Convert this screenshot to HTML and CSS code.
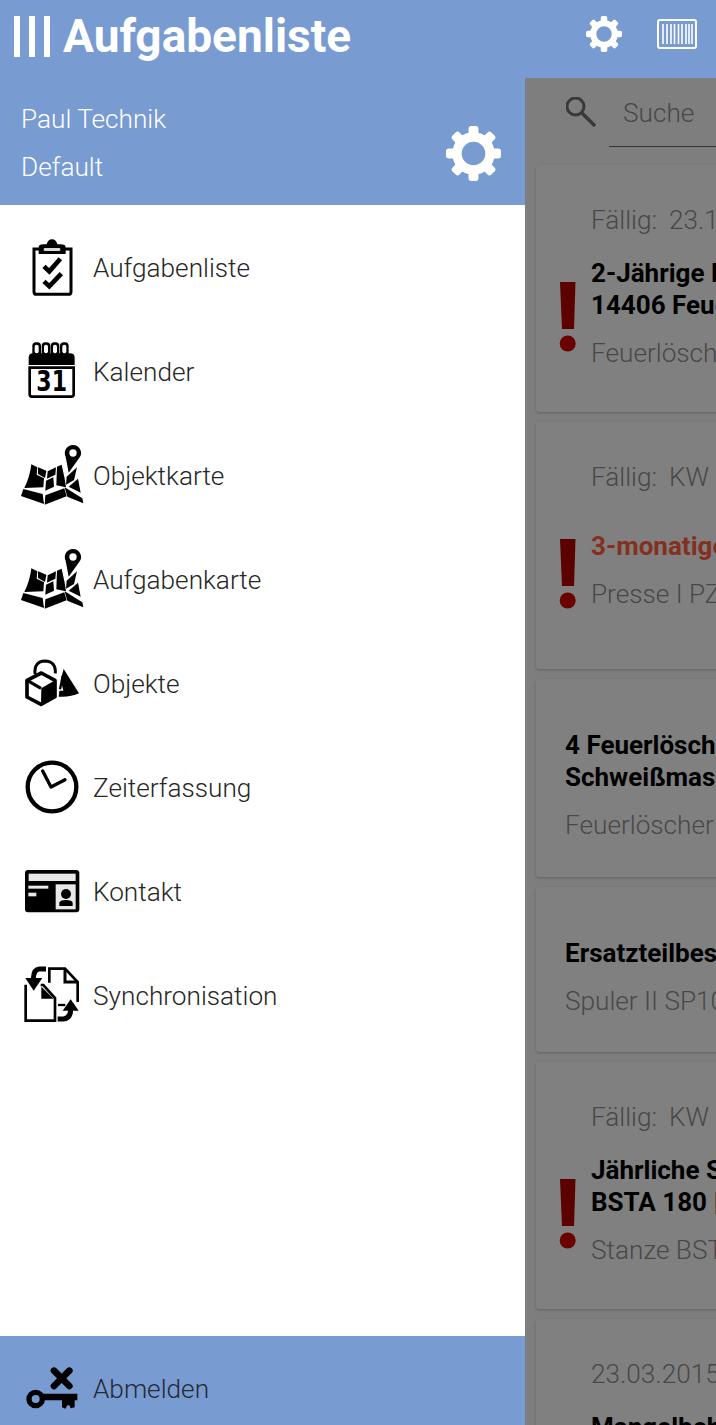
FILE: index.html
```html
<!DOCTYPE html>
<html lang="de">
<head>
<meta charset="utf-8">
<title>Aufgabenliste</title>
<link rel="stylesheet" href="styles.css">
</head>
<body>
<svg class="defs" width="0" height="0">
  <defs>
    <symbol id="gear" viewBox="-50 -50 100 100">
      <g fill="#fff">
        <rect x="-9" y="-50" width="18" height="22" rx="5"/>
        <rect x="-9" y="-50" width="18" height="22" rx="5" transform="rotate(45)"/>
        <rect x="-9" y="-50" width="18" height="22" rx="5" transform="rotate(90)"/>
        <rect x="-9" y="-50" width="18" height="22" rx="5" transform="rotate(135)"/>
        <rect x="-9" y="-50" width="18" height="22" rx="5" transform="rotate(180)"/>
        <rect x="-9" y="-50" width="18" height="22" rx="5" transform="rotate(225)"/>
        <rect x="-9" y="-50" width="18" height="22" rx="5" transform="rotate(270)"/>
        <rect x="-9" y="-50" width="18" height="22" rx="5" transform="rotate(315)"/>
      </g>
      <circle r="30" fill="none" stroke="#fff" stroke-width="17"/>
    </symbol>
    <symbol id="alert" viewBox="0 0 20 72">
      <path d="M2 0H17.500L16 47H4Z" fill="#5c0000"/>
      <circle cx="9.700" cy="61.500" r="8" fill="#6a0202"/>
    </symbol>
    <symbol id="map" viewBox="30 39 192 192">
      <path d="M64 103 82 112 80 134 102 145 100 172 43 174Q60 140 64 103Z"/>
      <path d="M40 177 98 192 102 222 33 198Z"/>
      <path d="M84 112 109 122 105 144 84 132Z"/>
      <path d="M113 124 138 112 136 134 111 146Z"/>
      <path d="M108 152 130 142 132 170 106 182Z"/>
      <path d="M141 110 155 104 164 146 168 172 139 166Z"/>
      <path d="M106 196 163 175 170 199 104 224Z"/>
      <path d="M170 140 201 112 192 150 168 164Z"/>
      <path d="M176 170 204 146 212 188Z"/>
      <path d="M164 172 217 205 220 220 172 200Z"/>
      <path fill-rule="evenodd" d="M189 45A24 24 0 0 1 207 85L176 128 167 80A24 24 0 0 1 189 45ZM189 58A11 11 0 1 0 189 80A11 11 0 1 0 189 58Z"/>
    </symbol>
  </defs>
</svg>

<div class="app">
  <header class="topbar">
    <div class="bars"><span></span><span></span><span></span></div>
    <h1 class="title">Aufgabenliste</h1>
    <svg class="top-gear"><use href="#gear"/></svg>
    <svg class="barcode" viewBox="0 0 40 30">
      <rect x="1" y="1" width="38" height="28" rx="2" fill="none" stroke="#fff" stroke-width="2"/>
      <path d="M6 5V25M10 5V25M14 5V25M17.500 5V25M21.500 5V25M25 5V25M29 5V25M32 5V25M35 5V25" stroke="#fff" stroke-width="1.600"/>
    </svg>
  </header>

  <div class="stage">
    <aside class="drawer">
      <div class="account">
        <div class="account-text">
          <div>Paul Technik</div>
          <div>Default</div>
        </div>
        <svg class="account-gear"><use href="#gear"/></svg>
      </div>
      <nav class="menu">
        <a class="item">
          <svg class="ico" viewBox="30 30 192 192">
            <path d="M88 72H72V200Q72 208 80 208H175Q183 208 183 200V72H165" fill="none" stroke="#000" stroke-width="9"/>
            <path d="M86 87V68Q86 58 100 58H110Q114 43 126 43T142 58H152Q167 58 167 68V87Z"/>
            <rect x="101" y="69" width="50" height="9" rx="4" fill="#d8d8d8"/>
            <path d="M102 124 118 139 151 101M102 169 118 184 154 146" fill="none" stroke="#000" stroke-width="14"/>
          </svg>
          <span>Aufgabenliste</span>
        </a>
        <a class="item">
          <svg class="ico" viewBox="30 342 192 192">
            <path d="M56 420V398Q56 385 70 385H180Q194 385 194 398V420Z"/>
            <rect x="67" y="352" width="26" height="42" rx="11"/>
            <rect x="95" y="352" width="26" height="42" rx="11"/>
            <rect x="122" y="352" width="26" height="42" rx="11"/>
            <rect x="150" y="352" width="26" height="42" rx="11"/>
            <rect x="74" y="359" width="12" height="26" rx="6" fill="#fff"/>
            <rect x="102" y="359" width="12" height="26" rx="6" fill="#fff"/>
            <rect x="129" y="359" width="12" height="26" rx="6" fill="#fff"/>
            <rect x="157" y="359" width="12" height="26" rx="6" fill="#fff"/>
            <path d="M59 428V508Q59 515 66 515H184Q191 515 191 508V428Z" fill="none" stroke="#000" stroke-width="8"/>
            <text class="cal-num" x="125" y="497" textLength="92" lengthAdjust="spacingAndGlyphs">31</text>
          </svg>
          <span>Kalender</span>
        </a>
        <a class="item">
          <svg class="ico"><use href="#map"/></svg>
          <span>Objektkarte</span>
        </a>
        <a class="item">
          <svg class="ico"><use href="#map"/></svg>
          <span>Aufgabenkarte</span>
        </a>
        <a class="item">
          <svg class="ico" viewBox="30 33 192 192">
            <path d="M75 102Q72 64 105 63Q138 64 136 100" fill="none" stroke="#000" stroke-width="9"/>
            <path d="M94 99 135 121V170L93 193 51 171V121Z" fill="#fff" stroke="#000" stroke-width="11" stroke-linejoin="round"/>
            <path d="M94 145 135 121V170L93 193Z"/>
            <path d="M53 122 93 145" stroke="#000" stroke-width="9"/>
            <path d="M161 87 207 160Q182 172 146 170L148 152 160 152 152 120Z"/>
            <path d="M159 106 150 148" stroke="#000" stroke-width="7"/>
          </svg>
          <span>Objekte</span>
        </a>
        <a class="item">
          <svg class="ico" viewBox="30 345 192 192">
            <circle cx="126" cy="441" r="73" fill="none" stroke="#000" stroke-width="13"/>
            <path d="M98 393 123 441 165 419" fill="none" stroke="#000" stroke-width="10" stroke-linecap="round" stroke-linejoin="round"/>
          </svg>
          <span>Zeiterfassung</span>
        </a>
        <a class="item">
          <svg class="ico" viewBox="30 27 192 192">
            <rect x="45" y="60" width="163" height="127" rx="9"/>
            <rect x="56" y="71" width="141" height="22" fill="#e8e8e8"/>
            <rect x="55" y="107" width="60" height="9" fill="#e8e8e8"/>
            <rect x="55" y="128" width="24" height="11" fill="#e8e8e8"/>
            <rect x="137" y="103" width="60" height="75" fill="#e8e8e8"/>
            <circle cx="168" cy="132" r="15"/>
            <path d="M148 168V158Q150 150 168 150T188 158V168Z"/>
          </svg>
          <span>Kontakt</span>
        </a>
        <a class="item">
          <svg class="ico" viewBox="30 339 192 192">
            <path d="M118 398V356H165L203 396V456" fill="none" stroke="#000" stroke-width="8"/>
            <path d="M165 358V396H202" fill="none" stroke="#000" stroke-width="9"/>
            <path d="M47 404V512H135V444L100 405H92" fill="none" stroke="#000" stroke-width="8"/>
            <path d="M94 410V446H131Z"/>
            <path d="M108 357H88Q71 358 70 386" fill="none" stroke="#000" stroke-width="15"/>
            <path d="M46 384H97L71 422Z"/>
            <path d="M143 507H160Q182 505 182 478" fill="none" stroke="#000" stroke-width="15"/>
            <path d="M158 482H206L182 448Z"/>
            <path d="M144 465H166" stroke="#000" stroke-width="7"/>
          </svg>
          <span>Synchronisation</span>
        </a>
      </nav>
      <footer class="logout">
        <svg class="ico" viewBox="60 96 192 192">
          <circle cx="107" cy="222" r="20" fill="none" stroke="#000" stroke-width="16"/>
          <path d="M124 206H232V226H224V247L212 250 208 241H202L196 251 186 247V226H124Z"/>
          <path d="M162 137 208 183M208 137 162 183" stroke="#000" stroke-width="20" stroke-linecap="round"/>
        </svg>
        <span>Abmelden</span>
      </footer>
    </aside>

    <main class="content">
      <div class="search">
        <svg class="search-ico" viewBox="0 0 30 30">
          <circle cx="9.500" cy="9.500" r="8.500" fill="none" stroke="#3a3a3a" stroke-width="3"/>
          <path d="M15.500 15.500 29 29" stroke="#3a3a3a" stroke-width="3.500"/>
        </svg>
        <div class="search-field">Suche</div>
      </div>
      <section class="cards">
        <article class="card dated">
          <svg class="mark"><use href="#alert"/></svg>
          <div class="card-main">
            <div class="date"><span>Fällig:</span><span>23.12.2015</span></div>
            <div class="body">
              <div class="name">2-Jährige Prüfung<br>14406 Feuerlöscher</div>
              <div class="sub">Feuerlöscher Halle 3</div>
            </div>
          </div>
        </article>
        <article class="card dated">
          <svg class="mark"><use href="#alert"/></svg>
          <div class="card-main">
            <div class="date"><span>Fällig:</span><span>KW 32</span></div>
            <div class="body">
              <div class="name overdue">3-monatige Wartung</div>
              <div class="sub">Presse I PZ 100</div>
            </div>
          </div>
        </article>
        <article class="card plain tall">
          <div class="name">4 Feuerlöscher prüfen<br>Schweißmaschine</div>
          <div class="sub">Feuerlöscher Halle 2</div>
        </article>
        <article class="card plain">
          <div class="name">Ersatzteilbestellung</div>
          <div class="sub">Spuler II SP100</div>
        </article>
        <article class="card dated">
          <svg class="mark"><use href="#alert"/></svg>
          <div class="card-main">
            <div class="date"><span>Fällig:</span><span>KW 33</span></div>
            <div class="body">
              <div class="name">Jährliche Sicherheitsprüfung<br>BSTA 180 | Stanze</div>
              <div class="sub">Stanze BSTA 180</div>
            </div>
          </div>
        </article>
        <article class="card plain last">
          <div class="date solo"><span>23.03.2015</span></div>
          <div class="name">Mangelbehebung</div>
        </article>
      </section>
    </main>
  </div>
</div>
</body>
</html>
```

FILE: styles.css
```css
* { box-sizing: border-box; }
html, body { margin: 0; padding: 0; }
body {
  width: 716px;
  height: 1425px;
  overflow: hidden;
  font-family: Roboto, "Liberation Sans", sans-serif;
  background: #808080;
}
.defs { display: block; height: 0; }
.app { display: flex; flex-direction: column; height: 1425px; overflow: hidden; }

.topbar {
  flex: none;
  height: 78px;
  background: #789bd1;
  display: flex;
  align-items: center;
  padding-left: 14px;
  color: #fff;
}
.bars { display: flex; gap: 9px; height: 41px; margin-top: -5px; }
.bars span { width: 6px; background: #fff; }
.title {
  margin: -6px 0 0 13px;
  font-size: 46px;
  font-weight: 700;
  line-height: 48px;
  flex: 1;
}
.top-gear { width: 36px; height: 36px; margin-top: -10px; }
.barcode { width: 40px; height: 30px; margin: -10px 19px 0 35px; }

.stage { flex: 1; display: flex; min-height: 0; }
.drawer {
  flex: none;
  width: 525px;
  background: #fff;
  display: flex;
  flex-direction: column;
}
.account {
  flex: none;
  height: 127px;
  background: #789bd1;
  color: #fff;
  display: flex;
  justify-content: space-between;
  padding: 17px 24px 0 21px;
  font-size: 26.200px;
  font-weight: 355;
  line-height: 48px;
}
.account-gear { width: 55px; height: 55px; margin-top: 31px; }

.menu { flex: 1; padding-top: 10px; }
.item {
  display: flex;
  align-items: center;
  height: 104px;
  padding-left: 20px;
  gap: 9px;
  font-size: 26.200px;
  font-weight: 355;
  color: #262626;
}
.item span { padding-top: 1px; }
.ico { width: 64px; height: 64px; flex: none; }
.logout {
  flex: none;
  height: 89px;
  background: #789bd1;
  display: flex;
  align-items: center;
  padding: 17px 0 0 20px;
  gap: 9px;
  font-size: 26.200px;
  font-weight: 355;
  color: #252a35;
}
.cal-num {
  font-family: "DejaVu Sans", sans-serif;
  font-size: 84px;
  font-weight: 700;
  text-anchor: middle;
}

.content { flex: 1; min-width: 0; overflow: hidden; background: #7e7e7e; }
.search {
  height: 87px;
  display: flex;
  padding-left: 41px;
}
.search-ico { width: 30px; height: 30px; margin-top: 19px; flex: none; }
.search-field {
  width: 200px;
  height: 69px;
  margin-left: 13px;
  padding: 15px 0 0 14px;
  border-bottom: 1px solid #333;
  font-size: 26.200px;
  font-weight: 355;
  line-height: 40px;
  color: #484848;
}
.cards { padding-left: 11px; display: flex; flex-direction: column; gap: 10px; }
.card {
  flex: none;
  width: 480px;
  background: #808080;
  border-radius: 4px;
  box-shadow: 0 1px 3px rgba(0, 0, 0, .22);
  white-space: nowrap;
}
.dated { height: 247px; display: flex; padding-left: 22px; }
.mark { width: 20px; height: 72px; flex: none; margin-top: 117px; }
.card-main {
  margin-left: 13px;
  padding: 39px 0 23px;
  display: flex;
  flex-direction: column;
}
.date {
  display: flex;
  gap: 12px;
  font-size: 26.200px;
  font-weight: 355;
  line-height: 32px;
  color: #484848;
}
.body { flex: 1; display: flex; flex-direction: column; justify-content: center; }
.name { font-size: 26px; font-weight: 700; line-height: 32px; color: #000; }
.overdue { color: #84301f; }
.sub {
  margin-top: 16px;
  font-size: 26.200px;
  font-weight: 355;
  line-height: 32px;
  color: #484848;
}
.plain { padding: 50px 0 35px 29px; }
.tall { padding-bottom: 36px; }
.last { padding: 39px 0 0 55px; height: 200px; }
.solo { margin-bottom: 21px; }
```
